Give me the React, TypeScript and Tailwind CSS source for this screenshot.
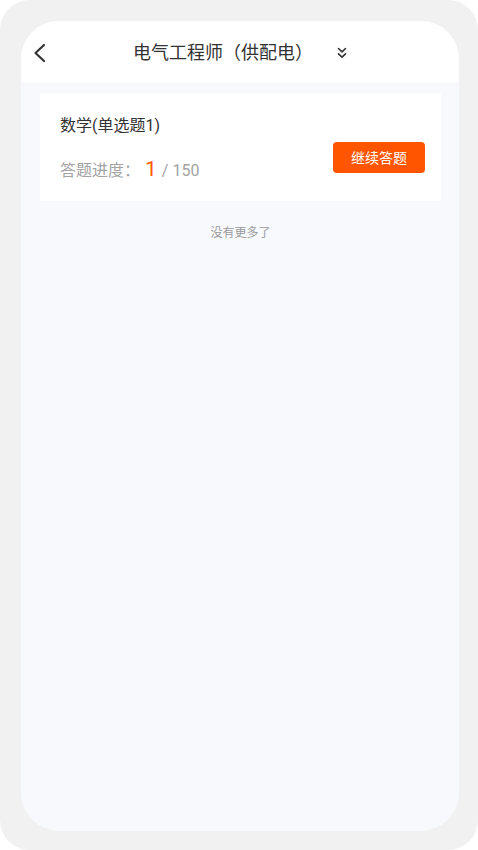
const font = { fontFamily: 'Roboto, "Noto Sans CJK SC", sans-serif' };

function BackIcon() {
  return (
    <svg width="15" height="20" viewBox="0 0 15 20" fill="none" stroke="#333" strokeWidth="2.2" strokeLinecap="round" strokeLinejoin="round">
      <path d="M12 2 L3.5 10 L12 18" />
    </svg>
  );
}

function DoubleChevron() {
  return (
    <svg width="10" height="12" viewBox="0 0 10 12" fill="none" stroke="#333" strokeWidth="1.6" strokeLinecap="round" strokeLinejoin="round">
      <path d="M1.5 1.5 L5 4.8 L8.5 1.5" />
      <path d="M1.5 6.8 L5 10.1 L8.5 6.8" />
    </svg>
  );
}

export default function App() {
  return (
    <div className="w-[478px] h-[850px] bg-white" style={font}>
      <div className="w-full h-full bg-[#f1f1f1] rounded-[30px] pl-[21px] pr-[19px] pt-[21px] pb-[19px]">
        <div className="h-full rounded-[38px] overflow-hidden bg-[#f8f9fd] flex flex-col">
          {/* header */}
          <div className="h-[61px] bg-white grid grid-cols-[48px_1fr_48px] items-center pt-[2px] shrink-0">
            <div className="pl-[11px] flex items-center">
              <BackIcon />
            </div>
            <div className="flex items-center justify-center gap-[24px]">
              <span className="text-[18px] leading-[26px] text-[#333]">电气工程师（供配电）</span>
              <DoubleChevron />
            </div>
            <div />
          </div>

          {/* list */}
          <div className="pt-[12px] pl-[19px] pr-[18px]">
            <div className="bg-white flex justify-between items-start pl-[20px] pr-[16px] pt-[20px] pb-[16px]">
              <div className="flex flex-col">
                <div className="text-[16px] leading-[24px] text-[#333]">数学(单选题1)</div>
                <div className="mt-[17px] flex items-baseline leading-[28px] text-[16px] text-[#a3a3a3]">
                  <span>答题进度：</span>
                  <span className="text-[21px] text-[#ff5a0a] ml-[5px]">1</span>
                  <span className="ml-[5px]">/ 150</span>
                </div>
              </div>
              <button className="mt-[28px] w-[92px] h-[31px] rounded-[4px] bg-[#ff5500] text-white text-[14px] leading-none flex items-center justify-center">
                继续答题
              </button>
            </div>
            <div className="mt-[24px] text-center text-[12px] leading-[16px] text-[#999]">没有更多了</div>
          </div>
        </div>
      </div>
    </div>
  );
}
